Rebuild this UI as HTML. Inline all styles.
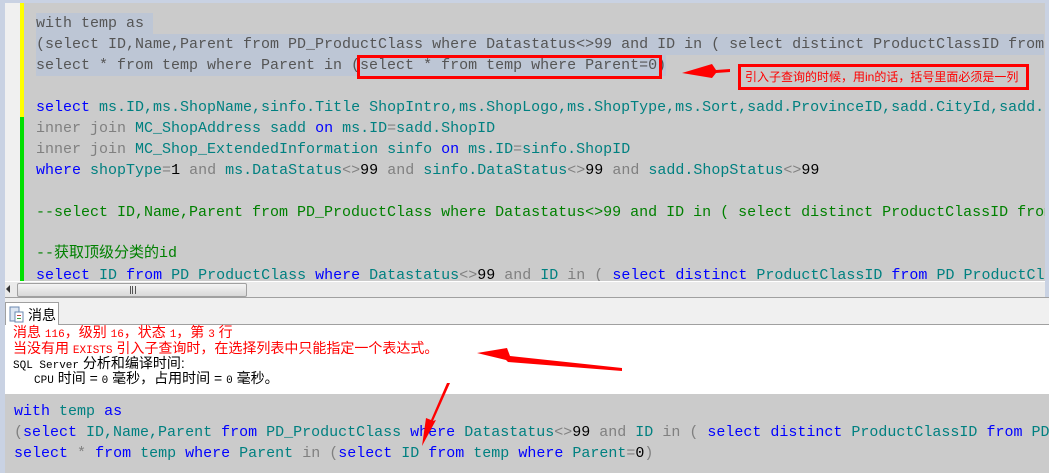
<!DOCTYPE html>
<html><head><meta charset="utf-8"><style>
*{margin:0;padding:0;box-sizing:border-box}
body{width:1049px;height:473px;overflow:hidden;background:#c9d2e3;position:relative;font-family:"Liberation Mono",monospace}
.ed{position:absolute;left:5px;top:3px;width:1040px;height:278px;background:#cbcbcb;overflow:hidden}
.gut{position:absolute;left:0;top:0;width:15px;height:278px;background:#f0f0f0}
.yb{position:absolute;left:15px;top:0;width:4px;height:114px;background:#ffff00}
.gb{position:absolute;left:15px;top:114px;width:4px;height:164px;background:#00e000}
.ln{position:absolute;white-space:pre;font-size:15px;line-height:21px;height:21px;color:#555}
.k{color:#0000ff}.t{color:#008080}.g{color:#808080}.n{color:#000}.c{color:#008000}
.sel{background:#bdc6d5}
.sb{position:absolute;left:5px;top:281px;width:1040px;height:16px;background:#eaeaea;border-top:1px solid #fff}
.th{position:absolute;left:12px;top:1px;width:230px;height:14px;background:linear-gradient(#f4f4f4,#d8d8d8);border:1px solid #a0a0a0;border-radius:2px}
.tabbar{position:absolute;left:5px;top:297px;width:1044px;height:28px;background:#f0f0f0;border-top:1px solid #a0a0a0;border-bottom:1px solid #a0a0a0}
.tab{position:absolute;left:0;top:4px;width:54px;height:24px;background:#fff;border:1px solid #a0a0a0;border-bottom:none;font-family:"Liberation Sans","Noto Sans CJK SC",sans-serif;font-size:14px;padding:2px 0 0 22px}
.msg{position:absolute;left:5px;top:325px;width:1044px;height:69px;background:#fff}
.m{position:absolute;white-space:pre;font-family:"Liberation Sans","Noto Sans CJK SC",sans-serif;font-size:14px;line-height:16px}
.m small{font-size:11px;font-family:"Liberation Mono",monospace}
.bot{position:absolute;left:5px;top:394px;width:1044px;height:79px;background:#cbcbcb}
</style></head><body>
<div class="ed">
<div class="gut"></div><div class="yb"></div><div class="gb"></div>
<div class="ln sel" style="left:31px;top:10px">with temp as </div>
<div class="ln sel" style="left:31px;top:31px">(select ID,Name,Parent from PD_ProductClass where Datastatus&lt;&gt;99 and ID in ( select distinct ProductClassID from</div>
<div class="ln sel" style="left:31px;top:52px">select * from temp where Parent in (select * from temp where Parent=0)</div>
<div class="ln" style="left:31px;top:94px"><span class="k">select</span> <span class="t">ms.ID,ms.ShopName,sinfo.Title ShopIntro,ms.ShopLogo,ms.ShopType,ms.Sort,sadd.ProvinceID,sadd.CityId,sadd..</span></div>
<div class="ln" style="left:31px;top:115px"><span class="g">inner join</span> <span class="t">MC_ShopAddress sadd</span> <span class="k">on</span> <span class="t">ms.ID</span><span class="g">=</span><span class="t">sadd.ShopID</span></div>
<div class="ln" style="left:31px;top:136px"><span class="g">inner join</span> <span class="t">MC_Shop_ExtendedInformation sinfo</span> <span class="k">on</span> <span class="t">ms.ID</span><span class="g">=</span><span class="t">sinfo.ShopID</span></div>
<div class="ln" style="left:31px;top:157px"><span class="k">where</span> <span class="t">shopType</span><span class="g">=</span><span class="n">1</span> <span class="g">and</span> <span class="t">ms.DataStatus</span><span class="g">&lt;&gt;</span><span class="n">99</span> <span class="g">and</span> <span class="t">sinfo.DataStatus</span><span class="g">&lt;&gt;</span><span class="n">99</span> <span class="g">and</span> <span class="t">sadd.ShopStatus</span><span class="g">&lt;&gt;</span><span class="n">99</span></div>
<div class="ln c" style="left:31px;top:199px">--select ID,Name,Parent from PD_ProductClass where Datastatus&lt;&gt;99 and ID in ( select distinct ProductClassID from</div>
<div class="ln c" style="left:31px;top:240px;font-family:'Liberation Mono','Noto Sans CJK SC',monospace">--获取顶级分类的id</div>
<div class="ln" style="left:31px;top:262px"><span class="k">select</span> <span class="t">ID</span> <span class="k">from</span> <span class="t">PD ProductClass</span> <span class="k">where</span> <span class="t">Datastatus</span><span class="g">&lt;&gt;</span><span class="n">99</span> <span class="g">and</span> <span class="t">ID</span> <span class="g">in (</span> <span class="k">select distinct</span> <span class="t">ProductClassID</span> <span class="k">from</span> <span class="t">PD ProductCl</span></div>
</div>
<div class="sb"><div style="position:absolute;left:1px;top:3px;width:0;height:0;border-top:4px solid transparent;border-bottom:4px solid transparent;border-right:4px solid #333"></div><div class="th"><span style="position:absolute;left:112px;top:2px;width:6px;height:8px;border-left:1px solid #555;border-right:1px solid #555"></span><span style="position:absolute;left:114px;top:2px;width:1px;height:8px;background:#555"></span></div></div>
<div class="tabbar"><div class="tab"><svg style="position:absolute;left:3px;top:3px" width="15" height="17"><rect x="1" y="1" width="9" height="14" fill="#dde6f2" stroke="#6b88b0"/><rect x="6" y="6" width="8" height="10" fill="#fff" stroke="#6b88b0"/><rect x="8" y="9" width="4" height="1" fill="#c04040"/><rect x="8" y="12" width="4" height="1" fill="#40a040"/></svg>消息</div></div>
<div class="msg">
<div class="m" style="left:8px;top:-1px;color:#f00">消息 <small>116</small>，级别 <small>16</small>，状态 <small>1</small>，第 <small>3</small> 行</div>
<div class="m" style="left:8px;top:15px;color:#f00">当没有用 <small>EXISTS</small> 引入子查询时，在选择列表中只能指定一个表达式。</div>
<div class="m" style="left:8px;top:30px;color:#000"><small>SQL Server</small> 分析和编译时间:</div>
<div class="m" style="left:29px;top:45px;color:#000"><small>CPU</small> 时间 = <small>0</small> 毫秒，占用时间 = <small>0</small> 毫秒。</div>
</div>
<div class="bot">
<div class="ln" style="left:9px;top:7px"><span class="k">with</span> <span class="t">temp</span> <span class="k">as</span></div>
<div class="ln" style="left:9px;top:28px"><span class="g">(</span><span class="k">select</span> <span class="t">ID,Name,Parent</span> <span class="k">from</span> <span class="t">PD_ProductClass</span> <span class="k">where</span> <span class="t">Datastatus</span><span class="g">&lt;&gt;</span><span class="n">99</span> <span class="g">and</span> <span class="t">ID</span> <span class="g">in (</span> <span class="k">select distinct</span> <span class="t">ProductClassID</span> <span class="k">from</span> <span class="t">PD</span></div>
<div class="ln" style="left:9px;top:49px"><span class="k">select</span> <span class="g">*</span> <span class="k">from</span> <span class="t">temp</span> <span class="k">where</span> <span class="t">Parent</span> <span class="g">in (</span><span class="k">select</span> <span class="t">ID</span> <span class="k">from</span> <span class="t">temp</span> <span class="k">where</span> <span class="t">Parent</span><span class="g">=</span><span class="n">0</span><span class="g">)</span></div>
</div>
<div style="position:absolute;left:357px;top:55px;width:305px;height:24px;border:3px solid #f00"></div>
<div style="position:absolute;left:738px;top:64px;width:291px;height:26px;border:3px solid #f00;color:#f00;font-family:'Liberation Sans','Noto Sans CJK SC',sans-serif;font-size:12px;line-height:20px;padding-left:4px;white-space:nowrap">引入子查询的时候，用in的话，括号里面必须是一列</div>
<svg style="position:absolute;left:0;top:0" width="1049" height="473">
<polygon points="682,73 712,64 716,70 730,69 730,72 716,73 712,78" fill="#f00"/>
<polygon points="477,353 507,348 510,356 622,368 622,371 508,362 506,360" fill="#f00"/>
<polygon points="450,383 447,383 431,420 426,418 422,446 436,420 433,421" fill="#f00"/>
</svg>
</body></html>
